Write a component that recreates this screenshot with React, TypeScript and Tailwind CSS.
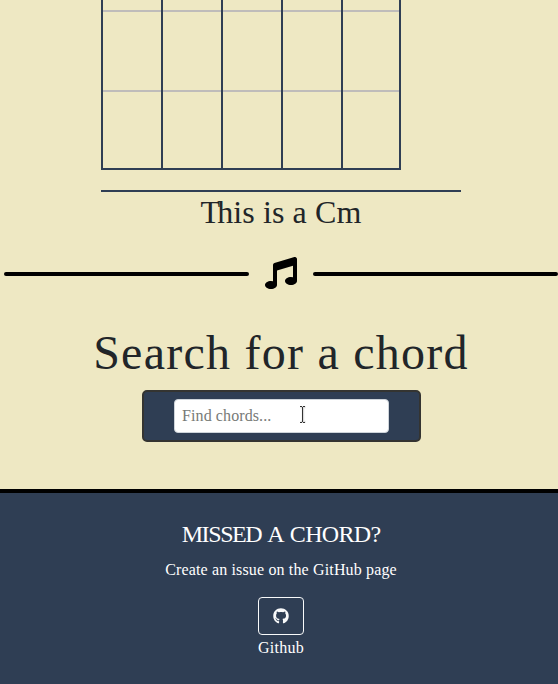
import { FaGithub, FaMusic } from "react-icons/fa";

const frets = [0, 1, 2];
const strings = [0, 1, 2, 3, 4];

function Fretboard() {
  return (
    <div className="ml-[101px] h-[170px] w-[300px] overflow-hidden border-r-2 border-b-2 border-[#2f3e54]">
      {frets.map((fret) => (
        <div key={fret} className={fret === 0 ? "flex h-[10px]" : "flex h-20"}>
          {strings.map((s) => (
            <div key={s} className="flex w-[60px] shrink-0 flex-col border-l-2 border-[#2f3e54]">
              {fret > 0 && <div className="h-0.5 bg-[#bfbcba]" />}
            </div>
          ))}
        </div>
      ))}
    </div>
  );
}

function Divider() {
  return (
    <div className="mt-[25px] ml-1 flex h-8 items-center gap-4">
      <div className="mt-0.5 h-1 w-[245px] rounded-full bg-black" />
      <FaMusic size={32} color="#000" />
      <div className="mt-0.5 h-1 w-[245px] rounded-full bg-black" />
    </div>
  );
}

function SearchBox() {
  return (
    <div className="mt-[7px] ml-[142px] flex h-[52px] w-[279px] items-center justify-center rounded-[5px] border-2 border-[#343431] bg-[#2f3e54]">
      <div className="relative h-[34px] w-[215px]">
        <input
          placeholder="Find chords..."
          className="block h-full w-full rounded border border-[#ced4da] bg-white px-[7px] text-base tracking-[0.1px] placeholder:text-[#777a77]"
        />
        <svg className="absolute top-[7px] left-[124px]" width="10" height="17" viewBox="0 0 10 17" fill="none">
          <path d="M2.5 1h5M5 1v15M2.5 16h5" stroke="#ddd" strokeWidth="2.4" />
          <path d="M2 .5h2M5 .5h2M4.5 1v15M2 16.5h2M5 16.5h2" stroke="#333" />
        </svg>
      </div>
    </div>
  );
}

function Footer() {
  return (
    <footer className="flex h-[195px] flex-col items-center border-t-4 border-black bg-[#2f3e54] pl-1 text-white">
      <h5 className="mt-[27px] text-2xl leading-[29px] tracking-[-0.7px] [word-spacing:2px]">
        <span className="tracking-[-1.4px]">MISSED</span> A CHORD?
      </h5>
      <p className="mt-2 text-base leading-[25px] tracking-[0.15px]">Create an issue on the GitHub page</p>
      <a className="mt-[15px] flex h-[38px] w-[46px] items-center justify-center rounded border border-[#f8f9fa]">
        <FaGithub size={16} color="#f8f9fa" />
      </a>
      <span className="text-base leading-[25px] tracking-[0.3px]">Github</span>
    </footer>
  );
}

export default function App() {
  return (
    <main className="h-[684px] w-[558px] overflow-hidden bg-[#eee8c3] font-['Liberation_Serif',serif] text-[#212529]">
      <Fretboard />
      <div className="mt-5 ml-[101px] h-[42px] w-[360px] border-t-2 border-[#2f3e54] text-center text-[32px] leading-[40px] tracking-[0.1px]">
        <span className="tracking-[-3px]">T</span>his is a Cm
      </div>
      <Divider />
      <h1 className="mt-[34px] ml-1 h-[60px] text-center text-5xl leading-[60px] tracking-[1.25px] whitespace-nowrap">
        Search for a chord
      </h1>
      <SearchBox />
      <div className="h-[47px]" />
      <Footer />
    </main>
  );
}
